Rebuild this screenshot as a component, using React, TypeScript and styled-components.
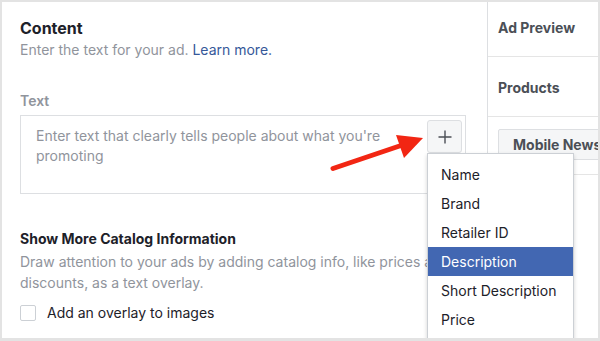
import React from "react";
import styled, { createGlobalStyle } from "styled-components";

const Global = createGlobalStyle`
  html, body { margin: 0; padding: 0; background: #ffffff; }
  body { font-family: Inter, "Liberation Sans", Arial, sans-serif; -webkit-font-smoothing: antialiased; }
  * { box-sizing: border-box; }
`;

const Frame = styled.div`
  position: relative;
  width: 600px;
  height: 341px;
  overflow: hidden;
  display: flex;
  border-style: solid;
  border-color: #e3e3e3;
  border-width: 2px 2px 3px 2px;
  background: #fff;
`;

const Main = styled.div`
  flex: 1;
  padding: 16px 0 0 18px;
  display: flex;
  flex-direction: column;
`;

const Heading = styled.div`
  font-size: 16px;
  line-height: 20px;
  font-weight: 700;
  color: #1d2129;
`;

const Sub = styled.div<{ $mt?: number }>`
  font-size: 14px;
  line-height: 18px;
  color: #90949c;
  white-space: nowrap;
  margin-top: ${(p) => p.$mt ?? 0}px;
`;

const Link = styled.a`
  color: #365899;
  text-decoration: none;
`;

const Label = styled.div`
  margin-top: 33px;
  font-size: 14px;
  line-height: 18px;
  font-weight: 600;
  color: #90949c;
`;

const TextBox = styled.div`
  margin-top: 5px;
  width: 446px;
  height: 79px;
  flex-shrink: 0;
  border: 1px solid #dddfe2;
  display: flex;
  align-items: flex-start;
  padding: 4px 3px 0 15px;
`;

const Placeholder = styled.div`
  flex: 1;
  padding-top: 6px;
  font-size: 14px;
  line-height: 20px;
  color: #90949c;
  white-space: nowrap;
`;

const PlusWrap = styled.div`
  position: relative;
`;

const PlusButton = styled.div`
  width: 35px;
  height: 33px;
  background: #f5f6f7;
  border: 1px solid #dddfe2;
  border-radius: 3px;
  display: flex;
  align-items: center;
  justify-content: center;
`;

const Menu = styled.div`
  position: absolute;
  z-index: 3;
  top: 33px;
  left: 0;
  width: 147px;
  padding-top: 6px;
  height: 220px;
  background: #fff;
  border: 1px solid #ccd0d5;
  box-shadow: 0 2px 4px rgba(0, 0, 0, 0.18);
`;

const MenuItem = styled.div<{ $active?: boolean }>`
  height: 29px;
  line-height: 29px;
  padding-left: 13px;
  font-size: 14px;
  white-space: nowrap;
  color: ${(p) => (p.$active ? "#ffffff" : "#1d2129")};
  background: ${(p) => (p.$active ? "#4267b2" : "transparent")};
`;

const SectionTitle = styled.div`
  margin-top: 36px;
  font-size: 14px;
  line-height: 18px;
  font-weight: 700;
  color: #1d2129;
  white-space: nowrap;
`;

const Desc = styled.div`
  margin-top: 3px;
  font-size: 14px;
  line-height: 21px;
  color: #90949c;
  white-space: nowrap;
`;

const CheckRow = styled.label`
  margin-top: 11px;
  display: flex;
  align-items: center;
  gap: 11px;
  font-size: 14px;
  line-height: 18px;
  color: #1d2129;
`;

const Box = styled.span`
  width: 16px;
  height: 16px;
  border: 1px solid #ccd0d5;
  border-radius: 2px;
  background: #fff;
`;

const Side = styled.div`
  width: 111px;
  flex-shrink: 0;
  border-left: 1px solid #dddfe2;
  display: flex;
  flex-direction: column;
  overflow: hidden;
`;

const Tab = styled.div<{ $h: number; $shift: number }>`
  height: ${(p) => p.$h}px;
  flex-shrink: 0;
  border-bottom: 1px solid #e5e5e5;
  display: flex;
  align-items: center;
  padding-left: 10px;
  padding-top: ${(p) => Math.max(p.$shift, 0)}px;
  padding-bottom: ${(p) => Math.max(-p.$shift, 0)}px;
  font-size: 14px;
  font-weight: 700;
  color: #4b4f56;
  white-space: nowrap;
`;

const SideBody = styled.div`
  padding: 12px 0 0 10px;
  display: flex;
  flex-direction: column;
`;

const PlacementButton = styled.div`
  height: 31px;
  width: 140px;
  flex-shrink: 0;
  background: #f5f6f7;
  border: 1px solid #dddfe2;
  border-radius: 2px;
  display: flex;
  align-items: center;
  padding-left: 14px;
  white-space: nowrap;
  font-size: 14px;
  font-weight: 700;
  color: #4b4f56;
`;

const PreviewCard = styled.div`
  margin-top: 14px;
  height: 200px;
  width: 140px;
  flex-shrink: 0;
  border-top: 1px solid #e5e5e5;
  border-left: 1px solid #e5e5e5;
`;

const Arrow = styled.svg`
  position: absolute;
  left: 0;
  top: 0;
  z-index: 4;
  pointer-events: none;
`;

export default function App() {
  const items = ["Name", "Brand", "Retailer ID", "Description", "Short Description", "Price"];
  return (
    <>
      <Global />
      <Frame>
        <Main>
          <Heading>Content</Heading>
          <Sub $mt={3}>
            Enter the text for your ad. <Link href="#">Learn more.</Link>
          </Sub>
          <Label>Text</Label>
          <TextBox>
            <Placeholder>
              Enter text that clearly tells people about what you're
              <br />
              promoting
            </Placeholder>
            <PlusWrap>
              <PlusButton>
                <svg width="16" height="16" viewBox="0 0 16 16">
                  <path d="M8 1.5v13M1.5 8h13" stroke="#4b4f56" strokeWidth="1.4" fill="none" />
                </svg>
              </PlusButton>
              <Menu>
                {items.map((it) => (
                  <MenuItem key={it} $active={it === "Description"}>
                    {it}
                  </MenuItem>
                ))}
              </Menu>
            </PlusWrap>
          </TextBox>
          <SectionTitle>Show More Catalog Information</SectionTitle>
          <Desc>
            Draw attention to your ads by adding catalog info, like prices and
            <br />
            discounts, as a text overlay.
          </Desc>
          <CheckRow>
            <Box />
            Add an overlay to images
          </CheckRow>
        </Main>
        <Side>
          <Tab $h={55} $shift={-3}>Ad Preview</Tab>
          <Tab $h={60} $shift={2}>Products</Tab>
          <SideBody>
            <PlacementButton>Mobile News Feed</PlacementButton>
            <PreviewCard />
          </SideBody>
        </Side>
        <Arrow width="600" height="341" viewBox="0 0 600 341">
          <line x1="331" y1="166.5" x2="399" y2="143.5" stroke="#f22613" strokeWidth="5" strokeLinecap="round" />
          <polygon points="421,136 394,133 402,156" fill="#f22613" />
        </Arrow>
      </Frame>
    </>
  );
}
